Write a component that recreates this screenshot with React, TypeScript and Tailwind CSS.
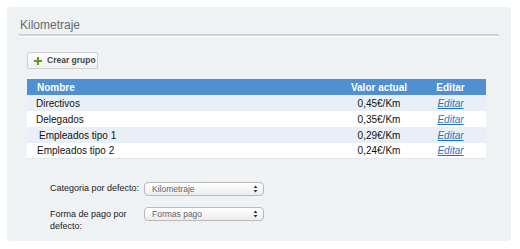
import React from 'react';

type Row = { name: string; value: string; pad: string };

const rows: Row[] = [
  { name: 'Directivos', value: '0,45€/Km', pad: 'pl-[9px]' },
  { name: 'Delegados', value: '0,35€/Km', pad: 'pl-[9px]' },
  { name: 'Empleados tipo 1', value: '0,29€/Km', pad: 'pl-[12px]' },
  { name: 'Empleados tipo 2', value: '0,24€/Km', pad: 'pl-[10px]' },
];

function FakeSelect({ label }: { label: string }) {
  return (
    <div className="flex h-[14px] w-[120px] shrink-0 items-center justify-between rounded-[4px] border border-[#b9b9b9] bg-gradient-to-b from-white to-[#ececec] pr-[5px] pl-[7px] text-[8.5px] text-[#666]">
      <span>{label}</span>
      <svg width="5" height="8" viewBox="0 0 5 8">
        <path d="M0.5 3 L2.5 0.5 L4.5 3 Z" fill="#333" />
        <path d="M0.5 5 L2.5 7.5 L4.5 5 Z" fill="#333" />
      </svg>
    </div>
  );
}

export default function App() {
  return (
    <div className="min-h-[249px] w-[520px] bg-white pt-[7px] pl-[7px] font-['Liberation_Sans',Arial,sans-serif]">
      <div className="h-[234px] w-[504px] rounded-[3px] bg-[#eef2f5] px-[12px] pt-[10px]">
        {/* Title */}
        <div className="border-b-2 border-[#cfd2d4] pb-[1px] pl-[1px] text-[12px] leading-[16px] text-[#6a6a6a] shadow-[0_1px_0_#ffffff]">
          Kilometraje
        </div>

        {/* Button */}
        <div className="mt-[16px] pl-[8px]">
          <button className="flex h-[17px] w-[71px] items-center gap-[5px] rounded-[2px] border border-[#cfcfcf] bg-gradient-to-b from-white to-[#f0f0f0] pl-[6px] text-[8.5px] font-bold text-[#444]">
            <svg width="8" height="8" viewBox="0 0 8 8">
              <rect x="3" y="0" width="2" height="8" fill="#5aa01e" />
              <rect x="0" y="3" width="8" height="2" fill="#5aa01e" />
            </svg>
            Crear grupo
          </button>
        </div>

        {/* Table */}
        <div className="mt-[10px] ml-[8px] w-[459px] text-[10px]">
          <div className="flex h-[16px] items-center bg-[#5090d2] font-bold text-white">
            <div className="flex-1 pl-[10px]">Nombre</div>
            <div className="w-[72px] text-center">Valor actual</div>
            <div className="w-[71px] text-center">Editar</div>
          </div>
          {rows.map((r, i) => (
            <div
              key={r.name}
              className={`flex h-[16px] items-center text-[#111] ${
                i % 2 === 0 ? 'bg-[#e9eff6]' : 'bg-white'
              } ${i === rows.length - 1 ? 'border-b border-[#e2e8ee]' : ''}`}
            >
              <div className={`flex-1 ${r.pad}`}>{r.name}</div>
              <div className="w-[72px] text-center">{r.value}</div>
              <div className="w-[71px] text-center">
                <a className="text-[#1f72c4] italic underline">Editar</a>
              </div>
            </div>
          ))}
        </div>

        {/* Form */}
        <div className="mt-[23px] flex flex-col gap-[11px] pl-[31px] text-[9px] text-[#222]">
          <div className="flex items-center">
            <div className="w-[94px] whitespace-nowrap">Categoria por defecto:</div>
            <FakeSelect label="Kilometraje" />
          </div>
          <div className="flex items-start">
            <div className="w-[94px] pt-[1px] pr-[14px] leading-[12px]">Forma de pago por defecto:</div>
            <FakeSelect label="Formas pago" />
          </div>
        </div>
      </div>
    </div>
  );
}
